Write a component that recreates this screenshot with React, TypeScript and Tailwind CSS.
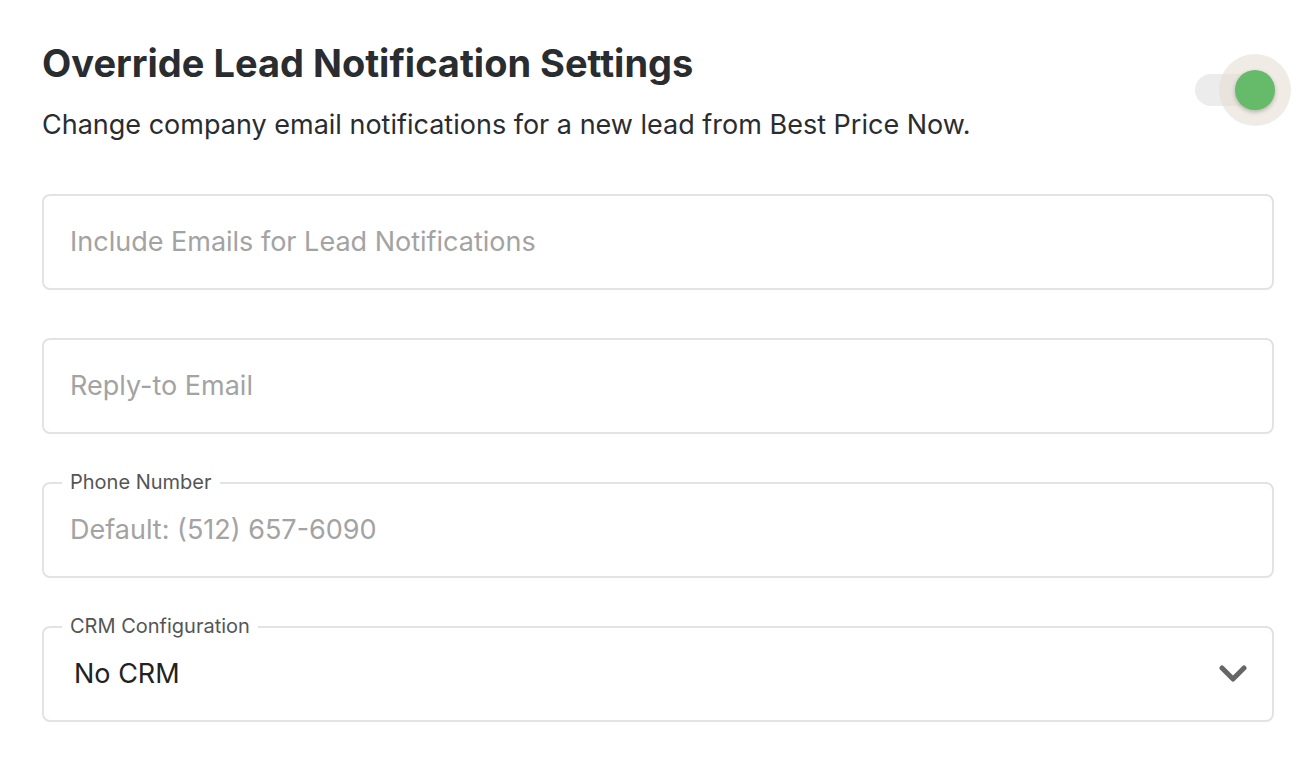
import React from "react";

const font = { fontFamily: "Inter, 'Noto Sans', sans-serif" };

function Field({ label, placeholder, value, select }: { label?: string; placeholder?: string; value?: string; select?: boolean }) {
  return (
    <div className="relative h-[96px] rounded-[8px] border-2 border-[#e3e3e3] flex items-center pl-[26px] pr-[24px]">
      {label && (
        <span className="absolute -top-[15px] left-[18px] bg-white px-[8px] text-[20px] leading-[26px] text-[#555]">
          {label}
        </span>
      )}
      {value ? (
        <span className="pl-[4px] text-[27px] text-[#222] flex-1">{value}</span>
      ) : (
        <span className="text-[27px] text-[#a3a3a3] flex-1">{placeholder}</span>
      )}
      {select && (
        <svg width="28" height="18" viewBox="0 0 28 18" className="mr-[1px]">
          <path d="M3 3 L14 14 L25 3" fill="none" stroke="#666" strokeWidth="5" strokeLinecap="round" strokeLinejoin="round" />
        </svg>
      )}
    </div>
  );
}

export default function App() {
  return (
    <div className="min-h-[782px] bg-white" style={font}>
      <div className="w-[1232px] ml-[42px] pt-[40px]">
        <div className="flex justify-between">
          <div>
            <h1 className="text-[38px] leading-[46px] font-bold text-[#2a2d30]">Override Lead Notification Settings</h1>
            <p className="mt-[21px] text-[27px] leading-[36px] text-[#2a2d30]">
              Change company email notifications for a new lead from Best Price Now.
            </p>
          </div>
          <div className="relative w-[96px] h-[72px] mt-[14px] -mr-[17px]">
            <div className="absolute left-[0px] top-[20px] w-[70px] h-[32px] rounded-full bg-[#ececec]" />
            <div className="absolute left-[24px] top-0 w-[72px] h-[72px] rounded-full bg-[#e6dfd4]/60" />
            <div className="absolute left-[40px] top-[16px] w-[40px] h-[40px] rounded-full bg-[#66bb6a] shadow-[0_2px_4px_rgba(0,0,0,0.25)]" />
          </div>
        </div>
        <div className="mt-[51px] flex flex-col gap-[48px]">
          <Field placeholder="Include Emails for Lead Notifications" />
          <Field placeholder="Reply-to Email" />
          <Field label="Phone Number" placeholder="Default: (512) 657-6090" />
          <Field label="CRM Configuration" value="No CRM" select />
        </div>
      </div>
    </div>
  );
}
